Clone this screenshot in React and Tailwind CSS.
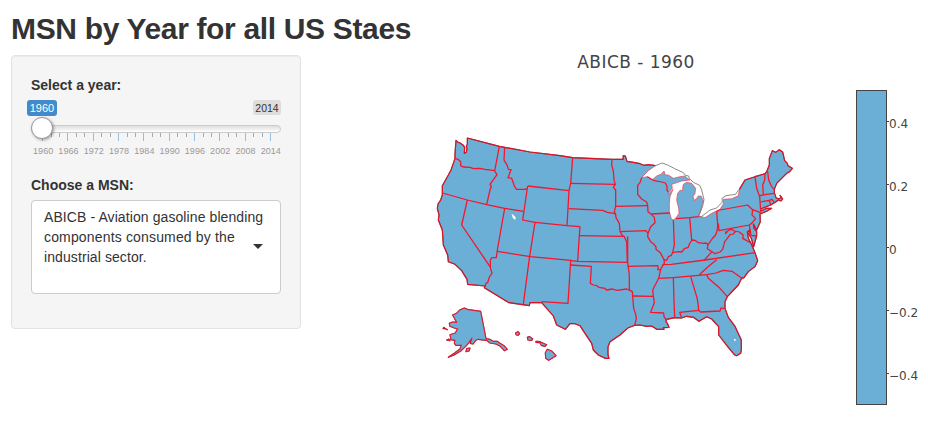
import React from "react";

const sans = "font-['Liberation_Sans',Arial,sans-serif]";
const years = [1960, 1966, 1972, 1978, 1984, 1990, 1996, 2002, 2008, 2014];
const ticks = ["0.4", "0.2", "0", "−0.2", "−0.4"];

// Map coordinates are expressed at three units per pixel.
// The outline is split so that ocean coast and lake shore can be stroked differently.
const northCoast =
  "1368 421L1374 427L1380 429L1390 436L1394 442L1393 460L1399 457L1401 445L1399 438L1402 433L1402 414L1498 439L1514 442L1590 456L1680 467L1718 473L1836 478L1869 478L1870 467L1876 468L1881 484L1900 487L1920 491L1932 496L1945 494L1966 497";
const lakeShore =
  "1966 497L1945 512L1925 533L1942 530L1956 540L1970 528L1984 522L1992 513L1996 525L2005 525L2020 535L2040 530L2055 528L2060 533L2070 540L2045 543L2025 550L2015 553L2017 565L2008 575L2004 583L2012 576L2019 568L2010 590L2008 610L2008 635L2014 656L2020 660L2028 654L2037 640L2036 625L2030 600L2033 580L2041 570L2047 573L2050 553L2060 547L2075 550L2087 565L2085 580L2079 590L2084 602L2095 588L2103 588L2110 602L2106 615L2103 630L2096 648L2115 653L2135 640L2160 628L2170 612L2170 598L2195 596L2215 587L2218 568";
const oceanCoast =
  "2218 568L2235 540L2265 530L2295 521L2300 515L2308 495L2308 475L2317 452L2327 457L2338 449L2348 456L2354 482L2362 490L2364 497L2377 505L2369 515L2360 520L2345 535L2330 550L2323 568L2323 578L2328 593L2336 597L2345 592L2340 586L2348 597L2343 603L2335 600L2327 606L2312 615L2282 627L2282 633L2300 625L2315 625L2300 634L2280 642L2281 665L2270 690L2260 672L2262 685L2270 695L2270 708L2261 740L2254 715L2246 702L2250 690L2242 696L2245 715L2254 732L2265 758L2273 782L2265 800L2245 815L2232 833L2225 835L2215 855L2182 890L2175 905L2175 925L2185 952L2205 979L2210 990L2224 1020L2224 1050L2222 1060L2210 1067L2203 1064L2185 1042L2156 1005L2156 980L2135 957L2120 950L2097 964L2080 952L2060 949L2045 954L2024 953L2000 958L1998 964L2003 972L2007 982L1990 983L1992 988L1970 988L1955 978L1940 979L1920 975L1905 976L1885 983L1860 1005L1830 1025L1824 1040L1824 1064L1827 1075L1815 1075L1795 1065L1780 1050L1775 1030L1755 1000L1740 977L1725 971L1710 971L1696 988L1670 975L1660 948L1625 908L1590 908L1588 917L1527 908L1453 863L1455 858L1403 853L1401 838L1385 812L1365 793L1345 785L1343 765L1330 735L1327 690L1315 660L1317 645L1312 625L1314 612L1322 600L1327 585L1327 557L1345 525L1353 510L1360 490L1365 475L1365 460L1368 421";
const mainland = `M${northCoast}L${lakeShore}L${oceanCoast}Z`;
const coast = `M${oceanCoast}L${northCoast}`;

const borders = [
  // Pacific and mountain states
  "M1365 475L1374 478L1382 485L1382 497L1390 501L1410 502L1421 506L1440 505L1455 508L1485 512",
  "M1498 439L1484 513L1491 524L1470 553L1474 559L1470 570L1460 614",
  "M1327 579L1402 600L1460 614L1514 625L1570 634",
  "M1402 600L1385 675L1470 800",
  "M1514 625L1492 750L1489 773L1475 773L1471 781L1471 803L1476 820L1468 831L1463 848L1458 850L1455 860",
  "M1514 442L1512 480L1522 497L1525 508L1533 509L1524 533L1535 535L1544 560L1550 568L1575 568L1580 565",
  "M1583 558L1568 660L1605 667L1588 775L1570 912",
  "M1583 558L1707 572",
  "M1605 667L1701 677L1740 680",
  "M1492 754L1591 770L1713 781",
  // Plains
  "M1718 473L1712 550L1707 572L1701 677",
  "M1712 550L1845 553",
  "M1706 626L1808 631L1822 637L1842 640L1846 644",
  "M1740 680L1738 708L1733 783",
  "M1738 707L1870 709",
  "M1712 782L1733 784L1883 787",
  "M1712 782L1704 910L1625 905",
  "M1712 795L1774 799L1771 850L1780 855L1790 857L1797 862L1815 865L1819 870L1838 867L1850 871L1880 867L1890 871L1897 875L1898 888",
  "M1883 709L1883 787L1888 825L1888 870",
  "M1836 478L1835 495L1840 513L1842 540L1846 553L1840 562L1847 570L1847 619L1843 634L1847 643L1848 653L1858 670L1860 694L1867 707L1873 710L1880 726L1882 787",
  "M1847 619L1943 617",
  "M1860 695L1938 692L1944 700",
  "M1883 799L1973 797L1975 802L1973 809L1980 809",
  "M1898 888L1960 889",
  "M1898 888L1901 925L1907 943L1909 955L1904 976",
  // Mississippi river and its neighbours
  "M1925 533L1920 548L1913 556L1913 583L1925 597L1940 606L1943 617L1944 635L1953 642L1963 652L1965 668L1952 680L1944 700L1943 710L1952 725L1960 731L1968 741L1968 748L1981 758L1992 779L1993 790L1983 805L1976 835L1958 870L1960 889L1963 908L1952 937L1991 939L1992 950L2000 962",
  "M1954 642L2010 639",
  "M1942 530L1960 541L1985 546L1996 549L2001 559L2001 571L2005 576",
  "M2020 660L2023 735L2018 757L2014 766L2005 770L2000 781L1992 779",
  "M2028 656L2069 653L2096 650",
  "M2069 653L2075 720",
  "M2018 758L2035 755L2045 756L2053 746L2065 742L2068 732L2076 720L2085 721L2095 728L2110 730L2118 729L2125 733L2136 717L2147 705L2152 690L2153 674L2150 634",
  "M2124 732L2122 746L2136 755L2112 781",
  "M2136 755L2145 761L2160 756L2168 748L2174 725L2182 715L2190 704L2200 702L2206 695L2195 688L2185 691L2177 701L2177 694",
  "M1987 794L2014 793L2115 780L2265 758",
  "M1976 835L2020 833L2120 824L2148 819L2170 811L2196 814L2228 836",
  "M2150 779L2134 792L2114 809L2098 824",
  "M2120 824L2125 835L2160 865L2182 890",
  "M2020 833L2022 903L2024 953",
  "M2072 830L2091 893L2094 910L2096 931",
  "M2045 954L2039 937L2096 931L2102 936L2160 933L2163 924L2175 926",
  // Mid Atlantic
  "M2150 634L2160 630L2243 615L2250 622L2258 629L2256 645L2267 656L2255 670L2248 675L2157 692L2155 670",
  "M2258 629L2282 638",
  "M2248 675L2253 706L2268 708",
  "M2206 693L2218 696L2230 706L2228 715L2240 722L2250 727",
  "M2265 530L2270 565L2279 590L2282 632",
  "M2295 521L2294 540L2288 555L2290 585",
  "M2303 515L2306 540L2315 560L2323 568",
  "M2279 587L2300 583L2322 580",
  "M2281 606L2308 601L2312 615",
  "M2308 601L2316 598L2322 607",
];

const islands = [
  "M1393 924L1405 929L1442 934L1458 1016L1469 1018L1479 1024L1491 1024L1500 1030L1512 1037L1522 1048L1513 1052L1501 1039L1488 1032L1470 1029L1460 1021L1435 1018L1427 1021L1419 1032L1411 1030L1416 1014L1405 1030L1396 1040L1382 1053L1362 1065L1345 1072L1364 1059L1380 1047L1384 1036L1368 1036L1363 1030L1365 1021L1353 1019L1350 1004L1366 999L1373 987L1361 983L1350 979L1348 970L1358 966L1370 967L1365 958L1358 945L1370 940L1378 931Z",
  "M1400 1046L1410 1044L1407 1053L1398 1055Z",
  "M1340 1020L1347 1017L1350 1022Z",
  "M1330 982L1343 990M1328 985L1339 987",
  "M1547 999L1554 995L1559 1001L1554 1006L1548 1004Z",
  "M1582 1012L1589 1010L1598 1017L1595 1021L1584 1020Z",
  "M1608 1024L1620 1025L1633 1031L1640 1034L1635 1039L1624 1036L1620 1028L1608 1027Z",
  "M1642 1048L1656 1054L1668 1067L1646 1081L1637 1075L1636 1058Z",
];

function UsMap() {
  return (
    <svg viewBox="1290 360 1110 750" className="h-[250px] w-[370px]" strokeLinejoin="round">
      <path d={mainland} fill="#6baed6" />
      <path d={`M${lakeShore}`} fill="none" stroke="#f03a4a" strokeWidth="2" />
      <g fill="none" stroke="#777777" strokeWidth="2.6">
        <path d="M1966 497L1987 489L2005 496L2024 506L2050 518L2056 526L2066 528L2068 535L2080 547L2099 556L2105 570L2112 599L2108 618L2096 648" />
        <path d="M2096 650L2104 650L2130 630L2150 624L2167 606L2166 595L2178 587L2207 583L2216 569" />
      </g>
      <path d={coast} fill="none" stroke="#555555" strokeWidth="3.4" />
      <path d={coast} fill="none" stroke="#ff0018" strokeWidth="3.4" strokeOpacity="0.8" />
      {islands.map((d) => (
        <g key={d} fill="#6baed6">
          <path d={d} stroke="#555555" strokeWidth="3.4" />
          <path d={d} stroke="#ff0018" strokeWidth="3.4" strokeOpacity="0.8" />
        </g>
      ))}
      <g fill="none" stroke="#f8142a" strokeWidth="3.8">
        {borders.map((d) => (
          <path key={d} d={d} />
        ))}
      </g>
      <path fill="#fff" d="M1535 641L1540 645L1547 652L1546 659L1541 657L1537 650Z" />
      <path fill="#fff" d="M2202 1017h5v5h-5z" />
    </svg>
  );
}

function YearSlider() {
  return (
    <div className="relative mt-[5px] h-[64px] w-[250px]">
      <div className="absolute -left-1 top-0 flex h-4 w-[30px] items-center justify-center rounded-[3px] bg-[#428bca] text-[11px] text-white">
        1960
      </div>
      <div className="absolute right-0 top-0 flex h-[15px] w-7 items-center justify-center rounded-[3px] bg-[#dddddd] text-[10.5px] text-[#333]">
        2014
      </div>
      <div className="absolute left-0 top-[25px] h-2 w-[250px] rounded-full border border-[#ccc] bg-gradient-to-b from-[#dedede] to-white" />
      <svg className="absolute left-0 top-[33px] h-2 w-[250px]" shapeRendering="crispEdges">
        {years.map((year, i) => (
          <g key={year}>
            <path d={`M${11.6 + i * 25.33} 0v8`} stroke="#98bddd" />
            {i < 9 &&
              [1, 2].map((n) => (
                <path key={n} d={`M${11.6 + (i + n / 3) * 25.33} 0v4`} stroke="#aaa" />
              ))}
          </g>
        ))}
      </svg>
      <div className="absolute left-0 top-[17px] size-[22px] rounded-full border border-[#999] bg-white shadow-[1px_1px_3px_rgba(0,0,0,0.35)]" />
      <div className="absolute -left-[0.5px] top-[45px] flex text-[9px] leading-[12px] tracking-[0.05px] text-[#999]">
        {years.map((year) => (
          <span key={year} className="w-[25.3px] text-center">
            {year}
          </span>
        ))}
      </div>
    </div>
  );
}

export default function App() {
  return (
    <main className={`${sans} h-[432px] w-[928px] overflow-hidden bg-white pl-[11px] text-[14px] leading-5 text-[#333]`}>
      <h1 className="h-[55px] whitespace-nowrap pt-[12px] text-[30px] font-bold leading-[33px] tracking-[-0.34px]">
        MSN by Year for all US Staes
      </h1>
      <div className="flex">
        <form className="h-[274px] w-[290px] rounded-[4px] border border-[#e3e3e3] bg-[#f5f5f5] p-[19px] shadow-[inset_0_1px_1px_rgba(0,0,0,0.05)]">
          <label className="block font-bold">Select a year:</label>
          <YearSlider />
          <label className="mt-[11px] block font-bold">Choose a MSN:</label>
          <div className="mt-[5px] flex h-[94px] w-[250px] justify-between rounded-[4px] border border-[#ccc] bg-white pb-[6px] pl-3 pr-[17px] pt-[6px]">
            <p className="w-[224px] shrink-0 whitespace-nowrap tracking-[0.09px]">
              ABICB - Aviation gasoline blending
              <br />
              <span className="tracking-[0.16px]">components consumed by the</span>
              <br />
              industrial sector.
            </p>
            <span className="-ml-4 mt-[37px] size-0 shrink-0 border-x-[5px] border-t-[5px] border-x-transparent border-t-[#333]" />
          </div>
        </form>
        <section className="ml-[129px] w-[370px] font-['DejaVu_Sans',Verdana,sans-serif]">
          <h2 className="-mt-[3px] mb-[48px] ml-[42px] text-center text-[17px] leading-5 tracking-[0.45px] text-[#444]">
            ABICB - 1960
          </h2>
          <UsMap />
        </section>
        <aside className="ml-[56px] mt-[35px] flex h-[315px] font-['DejaVu_Sans',Verdana,sans-serif] text-[12px] leading-4 text-[#444]">
          <div className="w-[31px] border border-[#444] bg-[#6baed6]" />
          <div className="flex flex-col pt-[26px]">
            {ticks.map((tick) => (
              <div key={tick} className="flex h-[63px] shrink-0 items-start whitespace-nowrap">
                <span className="mt-[5px] h-px w-[2px] bg-[#444]" />
                {tick}
              </div>
            ))}
          </div>
        </aside>
      </div>
    </main>
  );
}
